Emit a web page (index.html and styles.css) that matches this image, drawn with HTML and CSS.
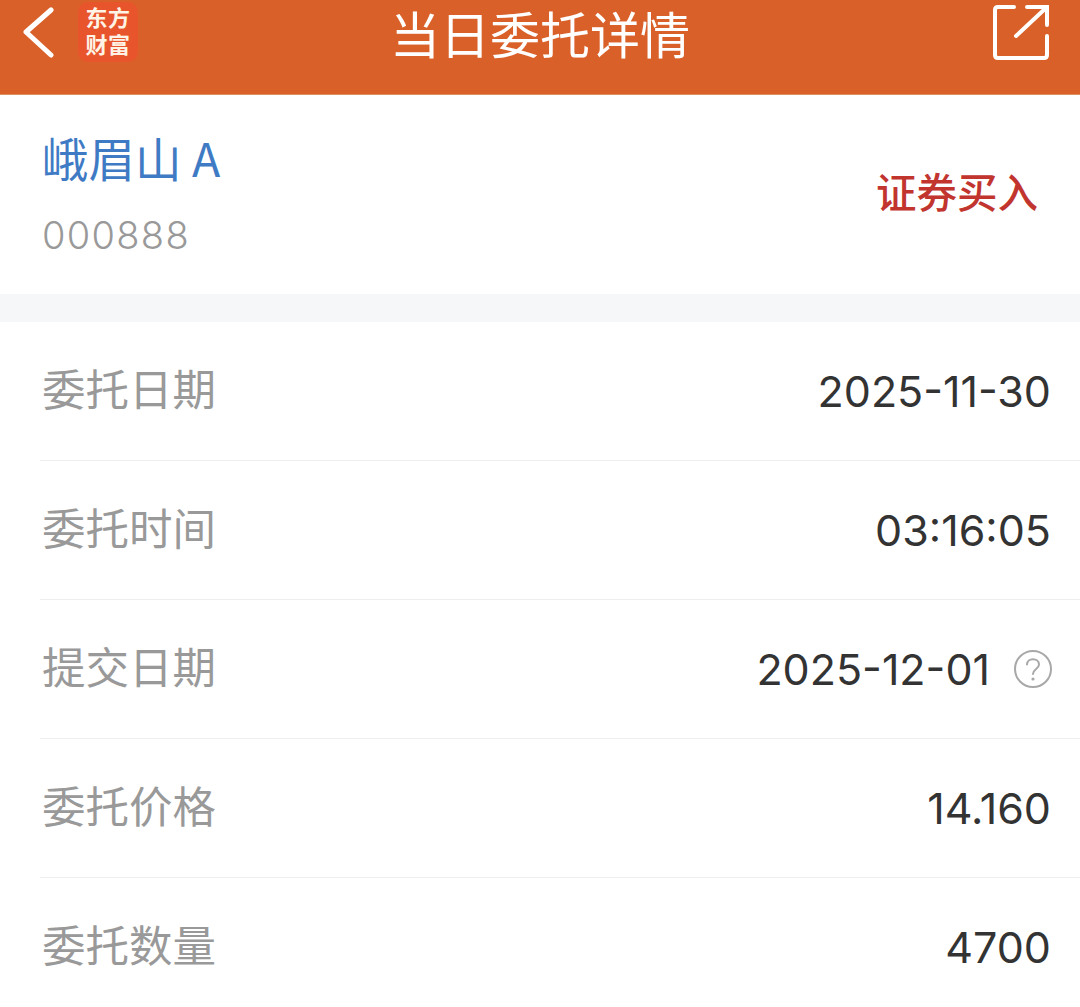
FILE: index.html
```html
<!DOCTYPE html>
<html lang="zh-CN">
<head>
    <meta charset="UTF-8">
    <meta name="viewport" content="width=device-width, initial-scale=1.0">
    <title>当日委托详情</title>
    <link rel="stylesheet" href="styles.css">
</head>
<body>
    <header class="topbar">
        <div class="topbar-left">
            <svg class="back-icon" width="32" height="60" viewBox="0 0 32 60">
                <path d="M28 10 L3 32 L28 55" fill="none" stroke="#fff" stroke-width="5" stroke-linecap="round" stroke-linejoin="round"/>
            </svg>
            <div class="logo">东方<br>财富</div>
        </div>
        <h1 class="topbar-title">当日委托详情</h1>
        <svg class="share-icon" width="60" height="60" viewBox="0 0 60 60">
            <path d="M23 5 H7 Q4 5 4 8 V53 Q4 56 7 56 H53 Q56 56 56 53 V34" fill="none" stroke="#fff" stroke-width="4" stroke-linecap="round"/>
            <path d="M36 5 H56 V23 M56 5 L25 34" fill="none" stroke="#fff" stroke-width="4" stroke-linecap="round"/>
        </svg>
    </header>

    <section class="stock">
        <div class="stock-info">
            <div class="stock-name">峨眉山 A</div>
            <div class="stock-code">000888</div>
        </div>
        <div class="stock-side">证券买入</div>
    </section>

    <section class="detail-list">
        <div class="detail-row">
            <span class="detail-label">委托日期</span>
            <span class="detail-value">2025-11-30</span>
        </div>
        <div class="detail-row">
            <span class="detail-label">委托时间</span>
            <span class="detail-value">03:16:05</span>
        </div>
        <div class="detail-row">
            <span class="detail-label">提交日期</span>
            <span class="detail-value">2025-12-01
                <svg class="help-icon" width="40" height="40" viewBox="0 0 40 40">
                    <circle cx="20" cy="20" r="18" fill="none" stroke="#a8a8a8" stroke-width="2"/>
                    <path d="M14 15.5 C14 8.5 26 8.5 26 15.5 C26 20 20 20 20 25" fill="none" stroke="#a8a8a8" stroke-width="2" stroke-linecap="round"/>
                    <circle cx="20" cy="30" r="1.6" fill="#a8a8a8"/>
                </svg>
            </span>
        </div>
        <div class="detail-row">
            <span class="detail-label">委托价格</span>
            <span class="detail-value">14.160</span>
        </div>
        <div class="detail-row">
            <span class="detail-label">委托数量</span>
            <span class="detail-value">4700</span>
        </div>
    </section>
</body>
</html>
```
FILE: styles.css
```css
* {
    margin: 0;
    padding: 0;
    box-sizing: border-box;
}
html, body {
    height: 1007px;
    overflow: hidden;
}
body {
    background-color: #fff;
    font-family: "Inter", "Noto Sans CJK SC", sans-serif;
    color: #333;
}
.topbar {
    height: 95px;
    background-color: #d96028;
    display: grid;
    grid-template-columns: 1fr auto 1fr;
    align-items: start;
    padding: 0 29px;
    border-bottom: 1px solid #e0915f;
}
.topbar-left {
    display: flex;
    align-items: flex-start;
    gap: 23px;
    padding-top: 2px;
    margin-left: -6px;
}
.back-icon {
    margin-top: -2px;
}
.logo {
    width: 60px;
    height: 60px;
    background-color: #e8552c;
    border-radius: 10px;
    color: #fff3e6;
    font-family: "Liberation Serif", "Noto Sans CJK SC", serif;
    font-weight: 700;
    font-size: 22px;
    letter-spacing: 0.5px;
    line-height: 27px;
    text-align: center;
    padding-top: 3px;
}
.topbar-title {
    text-align: center;
    font-size: 50px;
    line-height: 64px;
    font-weight: 400;
    color: #fff;
    font-family: "Noto Sans CJK SC", sans-serif;
}
.share-icon {
    margin-top: 2px;
    justify-self: end;
}
.stock {
    height: 199px;
    display: flex;
    justify-content: space-between;
    align-items: center;
    padding: 0 42px;
}
.stock-name {
    font-size: 46.5px;
    line-height: 66px;
    color: #3f7bc4;
    font-family: "Noto Sans CJK SC", sans-serif;
    margin-top: -8px;
}
.stock-code {
    font-size: 38px;
    line-height: 46px;
    font-weight: 300;
    color: #999;
    letter-spacing: 1.3px;
    margin-top: 22px;
}
.stock-side {
    font-size: 40.5px;
    font-weight: 500;
    color: #c2352f;
    font-family: "Noto Sans CJK SC", sans-serif;
    padding-bottom: 8px;
}
.detail-list {
    border-top: 28px solid #f5f7f8;
    padding-left: 40px;
}
.detail-row {
    height: 139px;
    display: flex;
    justify-content: space-between;
    align-items: center;
    padding-right: 29px;
    border-bottom: 1px solid #eeeeee;
}
.detail-label {
    font-size: 43.5px;
    color: #999;
    margin-left: 2px;
    padding-bottom: 7px;
    font-family: "Noto Sans CJK SC", sans-serif;
}
.detail-value {
    font-size: 43px;
    font-weight: 400;
    color: #333;
    display: flex;
    align-items: center;
    gap: 23px;
}
.help-icon {
    margin-right: -2px;
}
```
